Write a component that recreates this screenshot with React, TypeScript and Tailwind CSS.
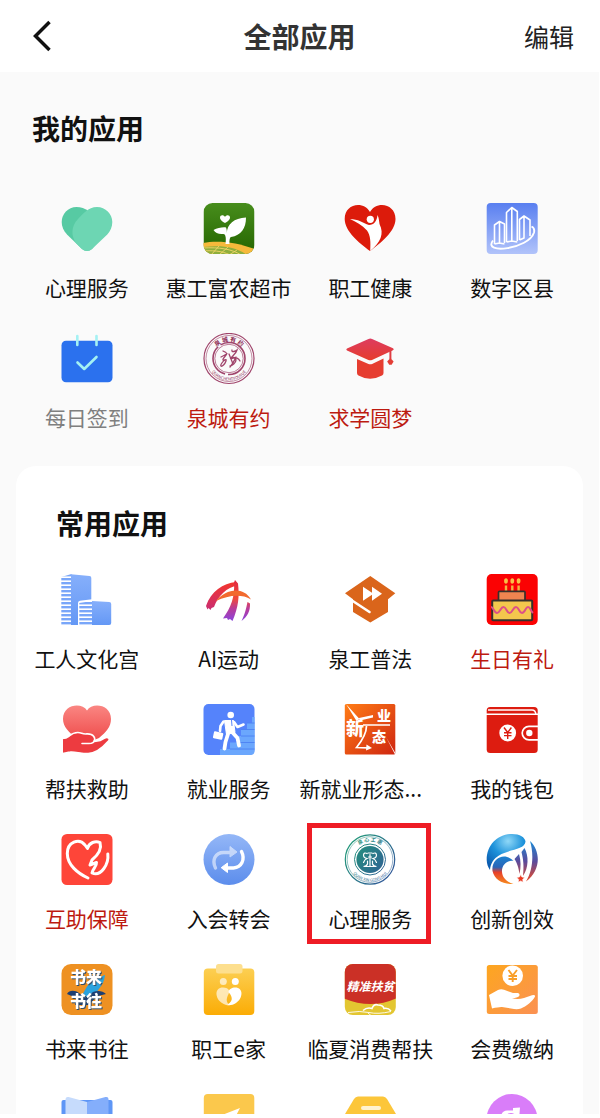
import type { ReactNode } from "react";
import clsx from "clsx";

type AppItem = {
  name: string;
  icon: ReactNode;
  tone?: "red" | "gray";
  marked?: boolean;
  clipped?: boolean;
};

function Icon({ children }: { children: ReactNode }) {
  return (
    <svg viewBox="0 0 52 52" className="block size-[52px]" fill="none" aria-hidden="true">
      {children}
    </svg>
  );
}

function Gradient({ id, from, to, diagonal }: { id: string; from: string; to: string; diagonal?: boolean }) {
  return (
    <linearGradient id={id} x1="0" y1="0" x2={diagonal ? "1" : "0"} y2="1">
      <stop stopColor={from} />
      <stop offset="1" stopColor={to} />
    </linearGradient>
  );
}

/* My apps */

const GreenHeart = () => (
  <Icon>
    <path d="M15.500 4C7 4 .7 11 .7 19c0 5 2 9 5.300 12.500L21 46c3 2.600 7 2.600 10 0l8-10L27 8C24 5.500 20 4 15.500 4z" fill="#57caa3" />
    <path d="M36 4c8.500 0 15.300 7 15.300 15 0 5-1.800 9-5 12.500L31 46c-3 2.600-7 2.600-10 0l-6-6c-5-7-5-17 2-24C22 11 27 4 36 4z" fill="#6dd6b3" />
  </Icon>
);

const Sprout = () => (
  <Icon>
    <defs>
      <Gradient id="sprout" from="#478d1c" to="#256500" />
      <clipPath id="sprout-clip">
        <rect x=".5" width="51" height="51" rx="9" />
      </clipPath>
    </defs>
    <g clipPath="url(#sprout-clip)">
      <rect x=".5" width="51" height="51" fill="url(#sprout)" />
      <path d="M0 40c14-3 33-1 52 6v6H0z" fill="#f6b93b" />
      <path d="M0 44c17-2 32-1 44 8H0z" fill="#8fae3c" />
      <path d="M0 45c16-1 29 1 38 7M0 48c14-1 22 1 29 5M16 43l-8 9M25 44l-9 8M34 47l-8 5" stroke="#f3d568" strokeWidth=".9" />
    </g>
    <path d="M22 20c-4-2.500-5-4-5-5.600 0-2.600 3.600-3 5-.6 1.400-2.400 5-2 5 .6 0 1.600-1 3.100-5 5.600z" fill="#fff" />
    <path d="M22.500 41c1-7-.3-10-2-10-5 .5-8-1-10-4 4-2 9-3 12.500-2.500.8 2 1 4 .8 6C24 21 31 15 43 14.500c0 11-5 18-15 19.500-1 0-1.800 3-1.500 7z" fill="#fff" />
  </Icon>
);

const HealthHeart = () => (
  <Icon>
    <path d="M26 48C15 40 .7 28 .7 16 .7 7 7 2 14 2c5 0 9.500 2.500 12 7 2.500-4.500 7-7 12-7 7 0 13.500 5 13.500 14C51.500 28 37 40 26 48z" fill="#dc1b0b" />
    <circle cx="26.300" cy="16.300" r="3.600" fill="#fff" />
    <path d="M6 16c8 0 13 4 19 6 5 0 8-4 8.500-10C35 15 35 18 35.500 21c5 10 1 18-9.300 27 .5-9 .5-15-3.200-20.500C18 22 12 19 6 16z" fill="#fff" />
  </Icon>
);

const CityBlocks = () => (
  <Icon>
    <defs>
      <Gradient id="city" from="#597ff0" to="#b1c3fa" />
    </defs>
    <rect x=".7" y="0" width="51" height="51" rx="4" fill="url(#city)" />
    <g stroke="#fff" strokeWidth="1.600" strokeLinejoin="round">
      <path d="M20.500 39V9.500l5.300-5 5.500 4V38M20.500 39l5.300-1 5.500 1M25.800 4.500V38" />
      <path d="M8.500 41V22l5-3.500 5 2.500v19M8.500 41l5-1 5 1M13.500 19v21" />
      <path d="M33.500 37V16.500l4.500-3.500 6 4V33M38 13v22l-4.500 2" />
      <path d="M7 37.500C-4 52 43 46 48 29.500c.7-3-.2-5-2.500-6" strokeWidth="1.900" />
    </g>
  </Icon>
);

const CheckIn = () => (
  <Icon>
    <rect x=".5" y="7.700" width="51" height="41.500" rx="4.500" fill="#2b71ee" />
    <path d="M16.300 3v9M35.500 3v9" stroke="#a4f1f3" strokeWidth="2.600" strokeLinecap="round" />
    <path d="M16.500 29.500l6.700 6.500 12.300-12" stroke="#a4f1f3" strokeWidth="2.600" strokeLinecap="round" strokeLinejoin="round" />
  </Icon>
);

const RedSeal = () => (
  <Icon>
    <defs>
      <path id="red-top" d="M8.500 26a17.500 17.500 0 0 1 35 0" />
      <path id="red-bottom" d="M4.500 26a21.500 21.500 0 0 0 43 0" />
    </defs>
    <g stroke="#a0446b">
      <circle cx="26" cy="25.500" r="25" strokeWidth="1.200" />
      <circle cx="26" cy="25.500" r="23" strokeWidth=".6" />
      <circle cx="26" cy="25.500" r="16" strokeWidth="1.600" strokeDasharray="34 3" strokeDashoffset="8" />
      <circle cx="26" cy="25.500" r="14.200" strokeWidth=".7" />
      <path d="M20 18l3 1.500M18 24c4-2 6-3 6-4 0 2-5 6-4 7s4-2 3 1-4 6-5 5 2-5 4-6M29 17c-1 3 4 1 5 0-1 4-5 6-6 8 3-1 5-1 5 2s-4 6-6 6M28 26c5-3 8 0 9 2M33 24c-2 4-3 7-6 10M26 21l4 10" strokeWidth="1.300" strokeLinecap="round" />
    </g>
    <g fill="#8c2852" className="font-[Noto_Sans_CJK_SC]">
      <text fontSize="6" fontWeight="700">
        <textPath href="#red-top" startOffset="50%" textAnchor="middle">泉 城 有 约</textPath>
      </text>
      <text fontSize="4">
        <textPath href="#red-bottom" startOffset="50%" textAnchor="middle">QUANCHENGYOUYUE</textPath>
      </text>
    </g>
  </Icon>
);

const GradCap = () => (
  <Icon>
    <defs>
      <Gradient id="cap" from="#dd3c60" to="#e63c2c" />
    </defs>
    <path d="M3 15.500L24.500 6q1.800-.8 3.600 0L49 15.300q1.600.9 0 1.900L28 27q-1.800.7-3.600 0L3 17.400q-1.500-1 0-1.900z" fill="url(#cap)" />
    <path d="M13 26l11.500 5q1.800.7 3.600 0L39.500 25.500V40q0 1.500-1.500 2.500-12 6.500-23.500 0Q13 41.500 13 40z" fill="#e63d30" />
    <path d="M46.400 17v9" stroke="#de3d43" strokeWidth="2" />
    <path d="M46.400 25l3.200 3.500-2 3.200h-2.400l-2-3.200z" fill="#e33d35" />
  </Icon>
);

/* Common apps */

const CultureTowers = () => (
  <Icon>
    <defs>
      <Gradient id="tower" from="#86affb" to="#6498f5" />
      <pattern id="floors" width="12" height="4" patternUnits="userSpaceOnUse">
        <rect width="12" height="2.400" fill="#79a6f9" />
      </pattern>
    </defs>
    <path d="M.3 3L10.500 0v51H.3z" fill="url(#floors)" />
    <path d="M10 .3L28.500 2q1.800.2 1.800 2v47H10z" fill="url(#tower)" />
    <path d="M17 51V29q0-2 2-2.200l12-1.600 17.500 1q2.500.2 2.500 2.800v22z" fill="#fff" />
    <path d="M18.300 29L31 27v24H18.300z" fill="url(#floors)" />
    <path d="M31 27l17.200 1q2 .2 2 2v19q0 2-2 2H31z" fill="url(#tower)" />
  </Icon>
);

const AiSport = () => (
  <Icon>
    <defs>
      <linearGradient id="ai" x1="0" y1="6" x2="0" y2="47" gradientUnits="userSpaceOnUse">
        <stop stopColor="#e02842" />
        <stop offset=".45" stopColor="#f04a3a" />
        <stop offset=".7" stopColor="#b83b9a" />
        <stop offset="1" stopColor="#8b45dc" />
      </linearGradient>
      <Gradient id="ai-left" from="#f3362b" to="#c92d73" />
    </defs>
    <path d="M3 32C8 17 20 9.500 33 8l1.500 3.500C24 13 15 22 11 33l-2.500 1-1 2-2-2-1 1.500z" fill="url(#ai-left)" />
    <path d="M32 6l3 3.500c1.500 13 .5 23.500-5.500 37.500l-2.500-2-2 1-1-2-4 .5c8-11 12-22 11-36z" fill="url(#ai)" />
    <path d="M13 27c10-12 27-15 35-1.500C38 19.500 25 21.500 13 27z" fill="#f26a2e" />
    <path d="M44.500 28l2.500 1.500c.3 8-2.500 13-8.500 17.500 3.500-7 4.500-12 6-19z" fill="url(#ai)" />
  </Icon>
);

const LawCap = () => (
  <Icon>
    <path d="M26.300 2l25 17.200-7.300 6V38L26.300 48.500 9 38V25.200l-8-6z" fill="#da651b" />
    <path d="M8 26.500L25.500 38" stroke="#fff" strokeWidth="2.600" strokeLinecap="round" />
    <path d="M19 12.700l9 6v-6l10 7-10 7v-6l-9 6z" fill="#fff" />
  </Icon>
);

const Birthday = () => (
  <Icon>
    <rect x=".7" width="51" height="51" rx="5" fill="#fb0203" />
    <path d="M20 11.500V17M26.300 11.500V17M32.600 11.500V17" stroke="#f4b13f" strokeWidth="2.400" />
    <g fill="#f8c046">
      <ellipse cx="20" cy="7" rx="1.900" ry="2.800" />
      <ellipse cx="26.300" cy="7" rx="1.900" ry="2.800" />
      <ellipse cx="32.600" cy="7" rx="1.900" ry="2.800" />
    </g>
    <rect x="12.500" y="17.300" width="26.500" height="9.500" rx="1" fill="#ef8550" stroke="#36302c" strokeWidth="1.700" />
    <rect x="6.200" y="26.500" width="40" height="19.800" rx="1" fill="#f3c74d" stroke="#36302c" strokeWidth="2" />
    <path d="M5 33c2.500 0 3 6 6 6s3.500-6 6.500-6 3 6 6 6 3.500-6 6.500-6 3 6 6 6 3.500-6 6-6 2.500 4 5 6" stroke="#dd4f87" strokeWidth="2" />
  </Icon>
);

const HelpingHand = () => (
  <Icon>
    <defs>
      <Gradient id="help" from="#fa8682" to="#ee4747" />
    </defs>
    <path d="M26 6.500C21-2 2 0 2 15c0 8 6 13 13 19l11 5 12-5c7-6 12-11 12-19C50 0 31-2 26 6.500z" fill="url(#help)" />
    <path
      d="M1.200 34.500q4-.2 7-2.500 6-5 12.500-2.800 2 .9 5 .7c7-.4 9 4 7.500 7.500l6-1 4-2.200c4-2 6.500.5 4 3.200-7 8-14 12-20 12.200-8 0-13-2-18-1.500-3 .2-5 1.500-8 1.500z"
      fill="#ed3b40"
      stroke="#fff"
      strokeWidth="1.600"
    />
    <path d="M21 39.500h7q5 0 5.500-3.500" stroke="#fff" strokeWidth="1.600" strokeLinecap="round" />
  </Icon>
);

const Careers = () => (
  <Icon>
    <rect x=".5" width="51" height="51" rx="5" fill="#5583fb" />
    <path d="M17 51v-6h10v-6.500h7V32h4v-6.500h6V19h5v-6h2.500v34q0 4-4 4z" fill="#6ba7fd" />
    <path d="M27 45h24.500M34 38.500h17.500M38 32h13.500M38 25.500h13.500M44 19h7.500" stroke="#4c81f3" strokeWidth=".9" />
    <circle cx="27.700" cy="11" r="3.300" fill="#fff" />
    <path d="M21.500 16.500h9l1.500 12-8.500 2z" fill="#fff" stroke="#fff" strokeWidth="1" strokeLinejoin="round" />
    <g stroke="#fff" strokeLinecap="round" strokeLinejoin="round">
      <path d="M20.500 17.500l-3 4.500-.5 5M31 18l3.500 5 6-2.500" strokeWidth="2.600" />
      <path d="M25 30l-2.500 8-1 6.500M29.500 28.500l5 5.500 1.500 7.500" strokeWidth="3.800" />
    </g>
    <rect x="10.500" y="28" width="9.500" height="7" rx="1" fill="#fff" transform="rotate(12 15 31)" />
    <path d="M28.500 16l.5 6" stroke="#5583fb" strokeWidth="1" />
  </Icon>
);

const NewForms = () => (
  <Icon>
    <defs>
      <Gradient id="forms" from="#ff7c16" to="#cf2610" diagonal />
    </defs>
    <rect x=".8" width="50.500" height="50.500" rx="1.500" fill="url(#forms)" />
    <path d="M2 0l13.500 15-3 2zM42 33l9.300 16v2zM15 14l14-3v2.500L16 16.500z" fill="#fff" />
    <path d="M19 21h27M22.500 22q0 9-10 21.500l11.500.3" stroke="#fff" strokeWidth="1.700" />
    <path d="M22.500 40.500l5.500 3.400-6 2.600z" fill="#fff" />
    <g fill="#fff" fontWeight="900" className="font-[Noto_Sans_CJK_SC]">
      <text x="2" y="31" fontSize="18">新</text>
      <text x="33" y="17" fontSize="14">业</text>
      <text x="28" y="38" fontSize="14">态</text>
    </g>
  </Icon>
);

const Wallet = () => (
  <Icon>
    <rect x=".7" y="3" width="51" height="46" rx="3.500" fill="#dd1c10" />
    <path d="M2 6h44q3.500 0 4 4.500M0 10.300h52" stroke="#fff" strokeWidth="1.500" />
    <circle cx="21.700" cy="29" r="8.400" fill="#fff" />
    <path d="M18 23.500l3.700 5 3.700-5M21.700 28.500V35M18 28.800h7.500M18 31.600h7.500" stroke="#dd1c10" strokeWidth="1.400" />
    <path d="M52 22.300h-9a6.800 6.800 0 0 0 0 13.600h9" stroke="#fff" strokeWidth="1.700" />
    <circle cx="43.300" cy="29" r="3.200" fill="#fff" />
  </Icon>
);

const MutualAid = () => (
  <Icon>
    <rect x=".5" width="51" height="51" rx="5.500" fill="#fe4539" />
    <path
      d="M27 44C17 39.500 6.300 31 6.300 19.500 6.300 8 18 3.500 24 11l2.500 3.500c1.500-6 8-8 12.500-6C41 15 37 21 31 26l-2 5 6.500-2.500c.5 4-4 6.500-4.500 10.500C40 43 48 30 46.800 20"
      stroke="#fff"
      strokeWidth="3"
      strokeLinecap="round"
      strokeLinejoin="round"
    />
  </Icon>
);

const Transfer = () => (
  <Icon>
    <defs>
      <Gradient id="transfer" from="#94b7f7" to="#5c8dec" />
    </defs>
    <circle cx="26" cy="25.500" r="25.500" fill="url(#transfer)" />
    <g opacity=".55">
      <path d="M12.500 34c-4-8 0-15.500 8-15.500h7" stroke="#fff" strokeWidth="3.400" strokeLinecap="round" />
      <path d="M27 12.500l7 5.500-7 5z" fill="#fff" stroke="#fff" strokeLinejoin="round" />
    </g>
    <path d="M38.500 17.500c4 8 0 16-8 16.500h-7" stroke="#fff" strokeWidth="3.400" strokeLinecap="round" />
    <path d="M24.500 29v9.500l-6.300-4.800z" fill="#fff" stroke="#fff" strokeLinejoin="round" />
  </Icon>
);

const TealSeal = () => (
  <Icon>
    <defs>
      <linearGradient id="teal" x1="6" y1="10" x2="46" y2="40" gradientUnits="userSpaceOnUse">
        <stop stopColor="#23977a" />
        <stop offset="1" stopColor="#315b98" />
      </linearGradient>
      <path id="teal-top" d="M8 25.500a18 18 0 0 1 36 0" />
      <path id="teal-bottom" d="M4 25.500a22 22 0 0 0 44 0" />
    </defs>
    <circle cx="26" cy="25.500" r="24.700" stroke="url(#teal)" strokeWidth="1.200" />
    <circle cx="26" cy="25.500" r="22.800" stroke="url(#teal)" strokeWidth=".5" />
    <circle cx="26" cy="25.500" r="15.500" stroke="url(#teal)" strokeWidth="1" />
    <circle cx="26" cy="25.500" r="13.600" fill="url(#teal)" />
    <path
      d="M24 19h4M23 19.500q-3-1.500-3.500 1.500 0 3 3.500 3.500-2.500 1-3.500 4M29 19.500q3-1.500 3.500 1.500 0 3-3.500 3.500 2.500 1 3.500 4M24.500 23h3M26 20.500V32M23.500 27v3q-1 2.500-4 2.500h13q-3 0-4-2.500v-3"
      stroke="#fff"
      strokeWidth="1.200"
      strokeLinecap="round"
    />
    <g fill="url(#teal)" className="font-[Noto_Sans_CJK_SC]">
      <text fontSize="5" fontWeight="700">
        <textPath href="#teal-top" startOffset="50%" textAnchor="middle">泉 心 工 惠</textPath>
      </text>
      <text fontSize="4">
        <textPath href="#teal-bottom" startOffset="50%" textAnchor="middle">QUAN XIN GONG HUI</textPath>
      </text>
    </g>
  </Icon>
);

const Innovation = () => (
  <Icon>
    <defs>
      <radialGradient id="globe" cx=".55" cy=".2" r=".8">
        <stop stopColor="#8fd8f7" />
        <stop offset=".5" stopColor="#1e93db" />
        <stop offset="1" stopColor="#0b5cb0" />
      </radialGradient>
      <linearGradient id="swirl" x1="0" y1="21" x2="0" y2="50" gradientUnits="userSpaceOnUse">
        <stop stopColor="#1b86d2" />
        <stop offset=".42" stopColor="#2a64b8" />
        <stop offset=".6" stopColor="#e8402a" />
        <stop offset="1" stopColor="#f68a1e" />
      </linearGradient>
      <linearGradient id="stream" x1="0" y1="7" x2="0" y2="48" gradientUnits="userSpaceOnUse">
        <stop stopColor="#1a8bd6" />
        <stop offset=".5" stopColor="#5b4b9c" />
        <stop offset="1" stopColor="#ef4a23" />
      </linearGradient>
    </defs>
    <path d="M.7 26C.5 11 12 0 26 0c8 0 13 3.500 13.500 7.500C39 16 23 15 13 21.500 8 24.500 4.500 29 4 36 2 33 .8 30 .7 26z" fill="url(#globe)" />
    <path d="M6.500 37C5 24 19 17.500 27.500 27 21 26 15.500 31 16 38c.5 6 5 10 11.500 12C17 50.500 8.500 46 6.500 37z" fill="url(#swirl)" />
    <path d="M44 7c11 10 11 30-4 40.500C47 36 48 20 44 7z" fill="url(#stream)" />
    <path d="M38.500 14c4.500 8 4 20-1.500 28C38 32 37.500 26 35.500 18z" fill="url(#stream)" />
    <path d="M33 20c2 7 2 13 .5 20-1-7-2.500-11-5-15z" fill="url(#stream)" />
    <path d="M34.700 40.500l1.200 2.500 2.800.4-2 2 .5 2.800-2.500-1.300-2.500 1.300.5-2.800-2-2 2.800-.4z" fill="#ea3a22" stroke="#fff" strokeWidth=".6" />
  </Icon>
);

const Letters = () => (
  <Icon>
    <rect x=".5" width="51" height="51" rx="9.500" fill="#ee9122" />
    <path d="M20 33c4-5 5-13 12-15 5-2 8-6 12-7-1 11-8 14-10 21-2 6-6 9-11 10z" fill="#2ba3de" />
    <path d="M6 30c2-4 8-4 12-1l6 5 8-6c5-2 10-1 13 2l-8 2-10 9H14l1-7z" fill="#1d3f72" />
    <g fontSize="16" fontWeight="900" fill="#fff" className="font-[Noto_Sans_CJK_SC] drop-shadow-[1px_1px_0_#35506a]">
      <text x="9" y="19">书来</text>
      <text x="9" y="43">书往</text>
    </g>
  </Icon>
);

const WorkerHome = () => (
  <Icon>
    <defs>
      <Gradient id="home" from="#fccf52" to="#fbac05" />
    </defs>
    <rect x=".8" y="4.500" width="50.500" height="46.500" rx="4" fill="url(#home)" />
    <rect x="13" y="0" width="26.500" height="9.500" rx="2.500" fill="#fddf8e" />
    <g fill="#fff">
      <circle cx="20.300" cy="17.500" r="3.500" opacity=".65" />
      <circle cx="32.300" cy="17.500" r="3.500" />
      <path d="M20 23.500c-9 0-8 11-1 15.500 3 2 7 3 7.500 2-6-5-.5-10 0-14-1-2.500-3.500-3.500-6.500-3.500z" opacity=".65" />
      <path d="M32 23.500c9 0 8 11 1 15.500-3.500 2.300-8 2.700-8.500 1.500 7-4 4-9 1-12.500.5-3 3.500-4.500 6.500-4.500z" />
    </g>
  </Icon>
);

const Linxia = () => (
  <Icon>
    <defs>
      <clipPath id="linxia">
        <rect x=".8" width="51" height="51" rx="8" />
      </clipPath>
    </defs>
    <g clipPath="url(#linxia)">
      <rect width="52" height="52" fill="#e3c631" />
      <path d="M0 0h52v34.500q-25 11-52 0z" fill="#cb3026" />
      <path d="M19 46.500q4-3.500 9-2 2-5 6-3.500 5 0 6 3.500 4-1 7 2.500" stroke="#fff" strokeWidth="1.600" />
      <path d="M4 48.500q12-2 21 0t22-1M24 49l3 2.500" stroke="#fff" strokeWidth=".9" />
    </g>
    <text x="26.500" y="27" fontSize="12" fontWeight="700" fontStyle="italic" fill="#fff" textAnchor="middle" className="font-[Noto_Sans_CJK_SC]">
      精准扶贫
    </text>
  </Icon>
);

const Dues = () => (
  <Icon>
    <defs>
      <Gradient id="dues" from="#fda61f" to="#fb9153" diagonal />
    </defs>
    <rect x=".8" y="1" width="51" height="49" rx="2.500" fill="url(#dues)" />
    <circle cx="26.700" cy="11.700" r="10.300" fill="#fff" />
    <path d="M22.500 6l4.200 5.500L31 6M26.700 11.500V18M22.500 12h8.500M22.500 15h8.500" stroke="#f9a02b" strokeWidth="1.900" />
    <path
      d="M3 31l9-5q3-1.500 6-.3l9 3.300h5q2.500.8 1 3.300-1.500 1.500-7 2.200 7 1 12-.5l8-2.800q3.500-.7 3 1.300c-2 4.500-9 10-14 12q-3 1-7 .5l-12-2q-3-.2-10 1.500z"
      fill="#fff"
    />
  </Icon>
);

const Book = () => (
  <Icon>
    <path d="M.5 8q0-2 2-2h47q2 0 2 2v40H.5z" fill="#5e96f6" />
    <path d="M4.500 5q.3-2.500 3-2L26 8v38L4.500 42z" fill="#c6dbfc" />
    <path d="M26 8l18.500-5q3-.5 3 2v37L26 46z" fill="#84aefb" />
  </Icon>
);

const Plane = () => (
  <Icon>
    <rect x=".8" width="50.500" height="51" rx="4" fill="#fbc84c" />
    <path d="M37 14L14 23l8 5 3 9z" fill="#fff" />
  </Icon>
);

const Box = () => (
  <Icon>
    <path d="M14 2.500h25q2.500 0 4 2.500l9 15v26H1V20l9-15q1.500-2.500 4-2.500z" fill="#fcc63a" />
    <rect x="17" y="12" width="20" height="4" rx="2" fill="#fff3cf" />
  </Icon>
);

const Purple = () => (
  <Icon>
    <circle cx="26" cy="25.500" r="25.500" fill="#d97df9" />
    <path d="M15 23c0-4 3-7 7-6.500h5V14l7-.5-1 12H15z" fill="#fff" />
    <path d="M22 20.500q3-2 6 0" stroke="#d97df9" strokeWidth="1.200" />
  </Icon>
);

const myApps: AppItem[] = [
  { name: "心理服务", icon: <GreenHeart /> },
  { name: "惠工富农超市", icon: <Sprout /> },
  { name: "职工健康", icon: <HealthHeart /> },
  { name: "数字区县", icon: <CityBlocks /> },
  { name: "每日签到", icon: <CheckIn />, tone: "gray" },
  { name: "泉城有约", icon: <RedSeal />, tone: "red" },
  { name: "求学圆梦", icon: <GradCap />, tone: "red" },
];

const commonApps: AppItem[] = [
  { name: "工人文化宫", icon: <CultureTowers /> },
  { name: "AI运动", icon: <AiSport /> },
  { name: "泉工普法", icon: <LawCap /> },
  { name: "生日有礼", icon: <Birthday />, tone: "red" },
  { name: "帮扶救助", icon: <HelpingHand /> },
  { name: "就业服务", icon: <Careers /> },
  { name: "新就业形态...", icon: <NewForms />, clipped: true },
  { name: "我的钱包", icon: <Wallet /> },
  { name: "互助保障", icon: <MutualAid />, tone: "red" },
  { name: "入会转会", icon: <Transfer /> },
  { name: "心理服务", icon: <TealSeal />, marked: true },
  { name: "创新创效", icon: <Innovation /> },
  { name: "书来书往", icon: <Letters /> },
  { name: "职工e家", icon: <WorkerHome /> },
  { name: "临夏消费帮扶", icon: <Linxia /> },
  { name: "会费缴纳", icon: <Dues /> },
  { name: "", icon: <Book /> },
  { name: "", icon: <Plane /> },
  { name: "", icon: <Box /> },
  { name: "", icon: <Purple /> },
];

function AppGrid({ items }: { items: AppItem[] }) {
  return (
    <div className="grid grid-cols-4 gap-y-[31px]">
      {items.map((item, i) => (
        <button key={i} type="button" className="relative flex flex-col items-center gap-[17px]">
          {item.icon}
          <span
            className={clsx(
              "h-[30px] text-[21px] leading-[30px] whitespace-nowrap",
              item.tone === "red" && "text-[#bd1a10]",
              item.tone === "gray" && "text-[#7f7f7f]",
              !item.tone && "text-[#111111]",
              item.clipped && "self-start"
            )}
          >
            {item.name}
          </span>
          {item.marked && (
            <span className="absolute -top-[11px] right-[10px] -bottom-[11px] left-[7px] border-5 border-[#ee1c25]" />
          )}
        </button>
      ))}
    </div>
  );
}

export default function App() {
  return (
    <div className="flex h-screen flex-col overflow-hidden border-r border-b-4 border-white bg-[#fafafa] font-['Noto_Sans_CJK_SC',sans-serif]">
      {/* Top bar */}
      <header className="grid h-[72px] shrink-0 grid-cols-[1fr_auto_1fr] items-center bg-white">
        <button type="button" aria-label="返回" className="justify-self-start pl-8">
          <svg viewBox="0 0 20 32" className="block h-8 w-5" fill="none" aria-hidden="true">
            <path d="M17.500 2L3.500 16l14 14" stroke="#111" strokeWidth="3.500" />
          </svg>
        </button>
        <h1 className="text-[28px] leading-10 font-bold text-[#333333]">全部应用</h1>
        <button type="button" className="justify-self-end pr-[25px] text-[25px] leading-10 text-[#222222]">
          编辑
        </button>
      </header>

      <main className="min-h-0 flex-1 overflow-y-auto px-4 [scrollbar-width:none]">
        {/* My apps */}
        <section className="pt-9 pb-[34px]">
          <h2 className="mb-[55px] pl-4 text-[28px] leading-10 font-bold text-[#111111]">我的应用</h2>
          <AppGrid items={myApps} />
        </section>

        {/* Common apps */}
        <section className="rounded-[20px] bg-white pt-[37px] pb-[34px]">
          <h2 className="mb-[31px] pl-10 text-[28px] leading-10 font-bold text-[#111111]">常用应用</h2>
          <AppGrid items={commonApps} />
        </section>
      </main>
    </div>
  );
}
